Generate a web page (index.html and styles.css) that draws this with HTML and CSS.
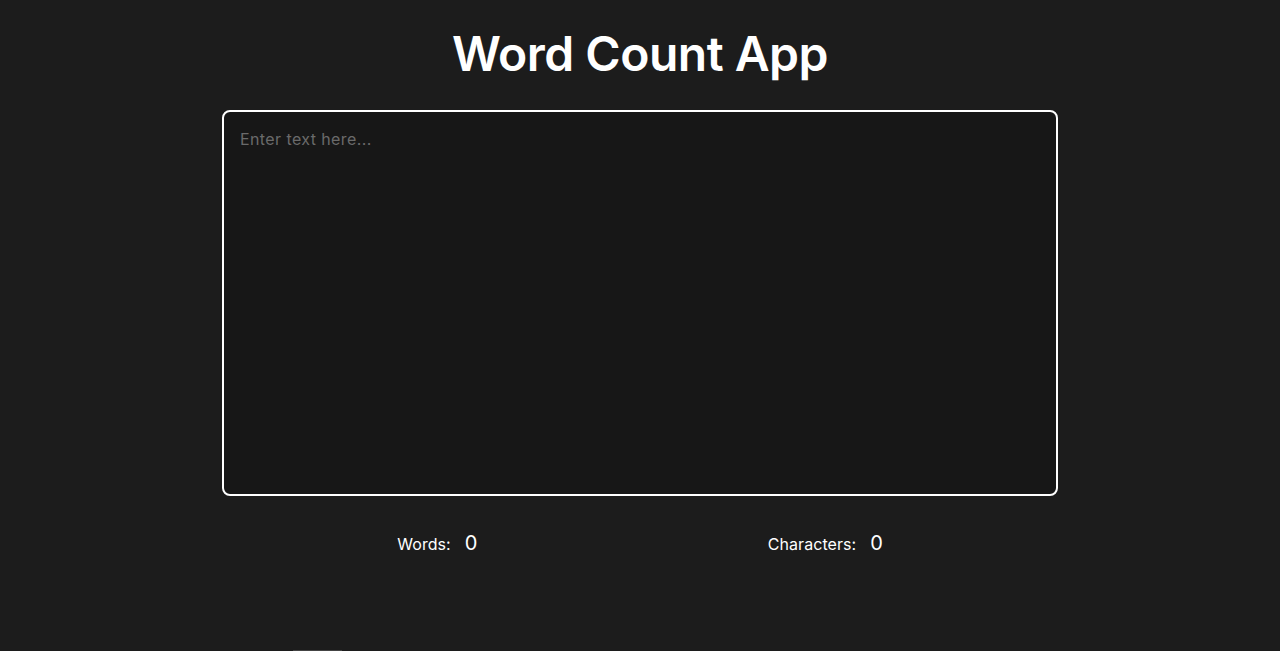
FILE: index.html
```html
<!DOCTYPE html>
<html lang="en">
<head>
<meta charset="utf-8">
<title>Word Count App</title>
<link rel="stylesheet" href="styles.css">
</head>
<body>
<main class="app">
  <h1 class="title">Word Count App</h1>
  <textarea class="input" placeholder="Enter text here..."></textarea>
  <div class="stats">
    <div class="stat"><span class="label">Words:</span><span class="value">0</span></div>
    <div class="stat"><span class="label">Characters:</span><span class="value">0</span></div>
  </div>
</main>
<div class="edge"></div>
</body>
</html>
```
FILE: styles.css
```css
html, body {
  margin: 0;
  padding: 0;
  background: #1c1c1c;
  height: 651px;
  overflow: hidden;
  font-family: Inter, "Open Sans", sans-serif;
  color: #ffffff;
}
.app {
  width: 836px;
  margin: 0 auto;
  display: flex;
  flex-direction: column;
  align-items: stretch;
}
.title {
  margin: 24px 0 0;
  height: 86px;
  text-align: center;
  font-size: 48px;
  font-weight: 600;
  letter-spacing: -0.5px;
  line-height: 60px;
}
.input {
  box-sizing: border-box;
  width: 836px;
  height: 386px;
  background: #171717;
  border: 2px solid #ffffff;
  border-radius: 8px;
  padding: 16px 16px;
  color: #ffffff;
  font-family: Inter, "Open Sans", sans-serif;
  font-size: 16px;
  letter-spacing: 0.4px;
  line-height: 23px;
  resize: none;
  outline: none;
}
.input::placeholder {
  color: #6a6a6a;
}
.stats {
  display: flex;
  justify-content: space-around;
  padding: 0 30px;
  margin-top: 35px;
}
.stat {
  display: flex;
  align-items: baseline;
  gap: 14px;
}
.label {
  font-size: 16px;
  letter-spacing: 0.05px;
}
.value {
  font-size: 20px;
}
.edge {
  width: 49px;
  height: 1px;
  background: #444444;
  margin-left: 293px;
  margin-top: 95px;
}
```
